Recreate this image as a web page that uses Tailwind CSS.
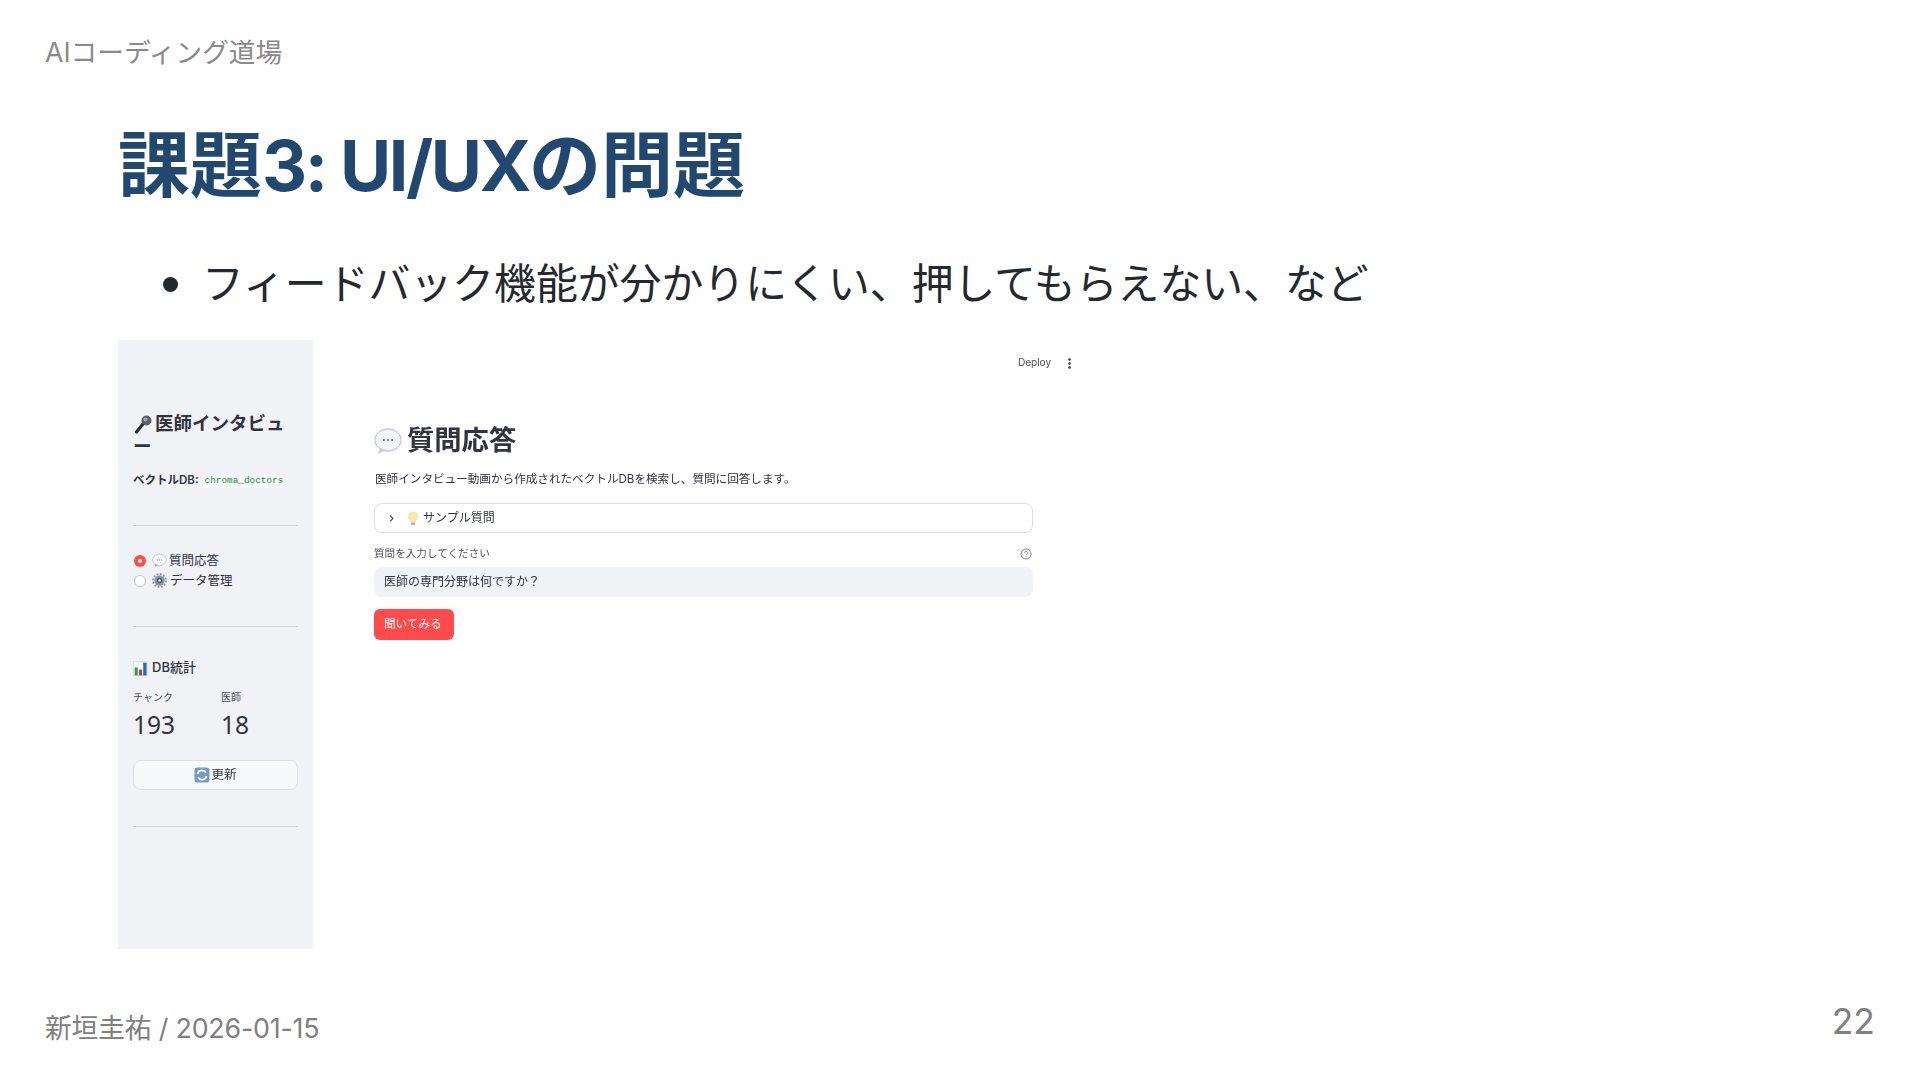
<!DOCTYPE html>
<html lang="ja">
<head>
<meta charset="utf-8">
<script src="https://cdn.jsdelivr.net/npm/@tailwindcss/browser@4"></script>
</head>
<body class="bg-white">
<div class="w-[1920px] h-[1080px] overflow-hidden flex flex-col font-['Inter','Noto_Sans_CJK_JP',sans-serif] text-[#24292f]">
  <header class="h-[34px] mt-[35px] pl-[45px] flex items-center text-[26.7px] text-[#8a8a8a]">AIコーディング道場</header>
  <h1 class="h-[80px] mt-[56px] pl-[118px] flex items-center text-[72px] font-bold text-[#224870] whitespace-pre"><span>課題</span><span class="text-[70px] tracking-[-2.4px]">3: UI/UX</span><span>の問題</span></h1>
  <div class="h-[50px] mt-[54px] pl-[163px] flex items-center gap-[24px] text-[41.85px] text-[#24292f]">
    <span class="w-[15px] h-[15px] rounded-full bg-[#24292f]"></span>
    <span>フィードバック機能が分かりにくい、押してもらえない、など</span>
  </div>
  <div class="h-[609px] mt-[31px] ml-[118px] flex text-[#31333f] blur-[0.3px]">
    <aside class="w-[195px] h-full bg-[#f0f2f6] pl-[15px] pr-[15px] pt-[72px] flex flex-col">
      <div class="text-[18.5px] leading-[23px] font-semibold">
        <svg class="inline w-[22px] h-[20px] align-[-4px]" viewBox="0 0 20 20"><path d="M2.5 18 L9 10" stroke="#2b2b2b" stroke-width="3.2" stroke-linecap="round"/><circle cx="12.5" cy="6.5" r="5" fill="#5c5f66"/><circle cx="11.5" cy="5.5" r="2" fill="#a2a5ab"/></svg>医師インタビュー
      </div>
      <div class="mt-[14px] h-[18px] flex items-center text-[11.5px] font-semibold">ベクトルDB:<span class="ml-[5px] px-[1px] bg-[#f6f8f7] text-[#1f8a4c] font-['Liberation_Mono',monospace] font-normal text-[9.4px]">chroma_doctors</span></div>
      <div class="mt-[35px] h-px bg-[#cfd2d8]"></div>
      <div class="mt-[25px] flex flex-col gap-[1px] text-[12.5px] leading-[19px]">
        <div class="flex items-center"><span class="ml-[1px] w-[12px] h-[12px] rounded-full bg-[#ff4b4b] flex items-center justify-center mr-[6px]"><span class="w-[4px] h-[4px] rounded-full bg-white"></span></span>
          <svg class="w-[15px] h-[15px] mr-[2px]" viewBox="0 0 14 14"><ellipse cx="7" cy="6.5" rx="6.3" ry="5.5" fill="#f7f8fa" stroke="#c3c8cf" stroke-width="0.9"/><path d="M3 10 L2.5 13 L6 11.5Z" fill="#8fbf9f"/><path d="M4.5 6.5h1M6.5 6.5h1M8.5 6.5h1" stroke="#777" stroke-width="0.8"/></svg>質問応答</div>
        <div class="flex items-center"><span class="ml-[1px] w-[12px] h-[12px] rounded-full bg-white border border-[#c5c8cf] mr-[6px]"></span>
          <svg class="w-[15px] h-[15px] mr-[3px]" viewBox="0 0 14 14"><circle cx="7" cy="7" r="4.8" fill="#8a97a3"/><circle cx="7" cy="7" r="6" fill="none" stroke="#8a97a3" stroke-width="1.8" stroke-dasharray="1.7 1.4"/><circle cx="7" cy="7" r="2.6" fill="#4c5a67"/><circle cx="7" cy="7" r="1.2" fill="#dfe3e8"/></svg>データ管理</div>
      </div>
      <div class="mt-[36px] h-px bg-[#cfd2d8]"></div>
      <div class="mt-[31px] h-[20px] flex items-center text-[13px] font-medium">
        <svg class="w-[15px] h-[15px] mr-[4px]" viewBox="0 0 14 14"><rect x="0.3" y="0.3" width="13.4" height="13.4" fill="#fbfcfd" stroke="#d5d9de" stroke-width="0.6"/><rect x="1.5" y="6" width="3" height="7.5" fill="#2f9e5a"/><rect x="5.5" y="8" width="3" height="5.5" fill="#c43b3b"/><rect x="9.5" y="1.5" width="3.2" height="12" fill="#2a6cb0"/></svg>DB統計
      </div>
      <div class="mt-[13px] flex">
        <div class="w-[88px]"><div class="text-[10px] leading-[12px] text-[#4b4e58]">チャンク</div><div class="mt-[5px] text-[24.5px] leading-[34px] font-['Noto_Sans',sans-serif]">193</div></div>
        <div><div class="text-[10px] leading-[12px] text-[#4b4e58]">医師</div><div class="mt-[5px] text-[24.5px] leading-[34px] font-['Noto_Sans',sans-serif]">18</div></div>
      </div>
      <div class="mt-[18px] h-[30px] rounded-[8px] bg-[#f8f9fb] border border-[#dcdfe4] flex items-center justify-center text-[12.5px]">
        <svg class="w-[16px] h-[16px] mr-[1px]" viewBox="0 0 16 16"><rect x="0.5" y="0.5" width="15" height="15" rx="3" fill="#6f9cc4"/><path d="M3.5 7a4.6 4.6 0 0 1 8.5-1.2M12.5 9a4.6 4.6 0 0 1-8.5 1.2" fill="none" stroke="#fff" stroke-width="1.8"/></svg>更新
      </div>
      <div class="mt-[36px] h-px bg-[#cfd2d8]"></div>
    </aside>
    <main class="w-[777px] flex flex-col">
      <div class="h-[16px] mt-[15px] flex items-center pl-[705px]">
        <span class="text-[10.2px] text-[#4b4e58] tracking-[-0.1px]">Deploy</span>
        <svg class="ml-[17px] w-[3px] h-[11px]" viewBox="0 0 3 11"><circle cx="1.5" cy="1.5" r="1.3" fill="#333"/><circle cx="1.5" cy="5.5" r="1.3" fill="#333"/><circle cx="1.5" cy="9.5" r="1.3" fill="#333"/></svg>
      </div>
      <div class="pl-[61px] w-[720px] flex flex-col">
        <div class="mt-[52px] h-[36px] flex items-center text-[27.3px] font-bold">
          <svg class="w-[28px] h-[28px] mr-[5px]" viewBox="0 0 28 28"><ellipse cx="14" cy="13" rx="13" ry="11" fill="#f3f4f6" stroke="#c9ccd2" stroke-width="1.4"/><path d="M6 21 L4 27 L12 23Z" fill="#c9ccd2"/><path d="M9 13h2M13 13h2M17 13h2" stroke="#666" stroke-width="1.3"/></svg>質問応答
        </div>
        <p class="mt-[13px] h-[16px] flex items-center text-[11.6px] ml-[1px]">医師インタビュー動画から作成されたベクトルDBを検索し、質問に回答します。</p>
        <div class="mt-[15px] h-[30px] rounded-[8px] border border-[#dadce1] flex items-center pl-[14px] text-[12px]">
          <svg class="w-[5px] h-[7px] mr-[13px]" viewBox="0 0 5 7"><path d="M1 0.7L4 3.5L1 6.3" fill="none" stroke="#444" stroke-width="1.1"/></svg>
          <svg class="w-[12px] h-[15px] mr-[4px]" viewBox="0 0 12 15"><path d="M6 1a4.6 4.6 0 0 0-2.6 8.4V11h5.2V9.4A4.6 4.6 0 0 0 6 1Z" fill="#fbe9a8" stroke="#f0dd9a" stroke-width="0.6"/><rect x="4" y="11.5" width="4" height="2.5" fill="#a9b3bd"/></svg>サンプル質問
        </div>
        <div class="mt-[13px] h-[16px] flex items-center justify-between text-[10.6px] text-[#4b4e58]">
          <span>質問を入力してください</span>
          <svg class="w-[12px] h-[12px] mr-[1px]" viewBox="0 0 12 12"><circle cx="6" cy="6" r="5" fill="none" stroke="#777" stroke-width="0.9"/><path d="M4.5 4.8a1.5 1.5 0 1 1 2.2 1.3c-.5.3-.7.5-.7 1" fill="none" stroke="#777" stroke-width="0.9"/><circle cx="6" cy="8.8" r="0.5" fill="#777"/></svg>
        </div>
        <div class="mt-[5px] h-[30px] rounded-[8px] bg-[#f0f2f6] flex items-center pl-[10px] text-[12px]">医師の専門分野は何ですか？</div>
        <div class="mt-[12px] w-[80px] h-[31px] rounded-[6px] bg-[#ff4b4b] text-white text-[11.6px] flex items-center pl-[10px]">聞いてみる</div>
      </div>
    </main>
  </div>
  <footer class="mt-[32px] h-[70px] pl-[45px] pr-[45px] flex justify-between text-[#808080]">
    <span class="mt-[27px] h-[40px] flex items-center text-[26.8px] tracking-[-0.2px]">新垣圭祐 / 2026-01-15</span>
    <span class="mt-[19px] h-[44px] flex items-center text-[35.5px]">22</span>
  </footer>
</div>
</body>
</html>
